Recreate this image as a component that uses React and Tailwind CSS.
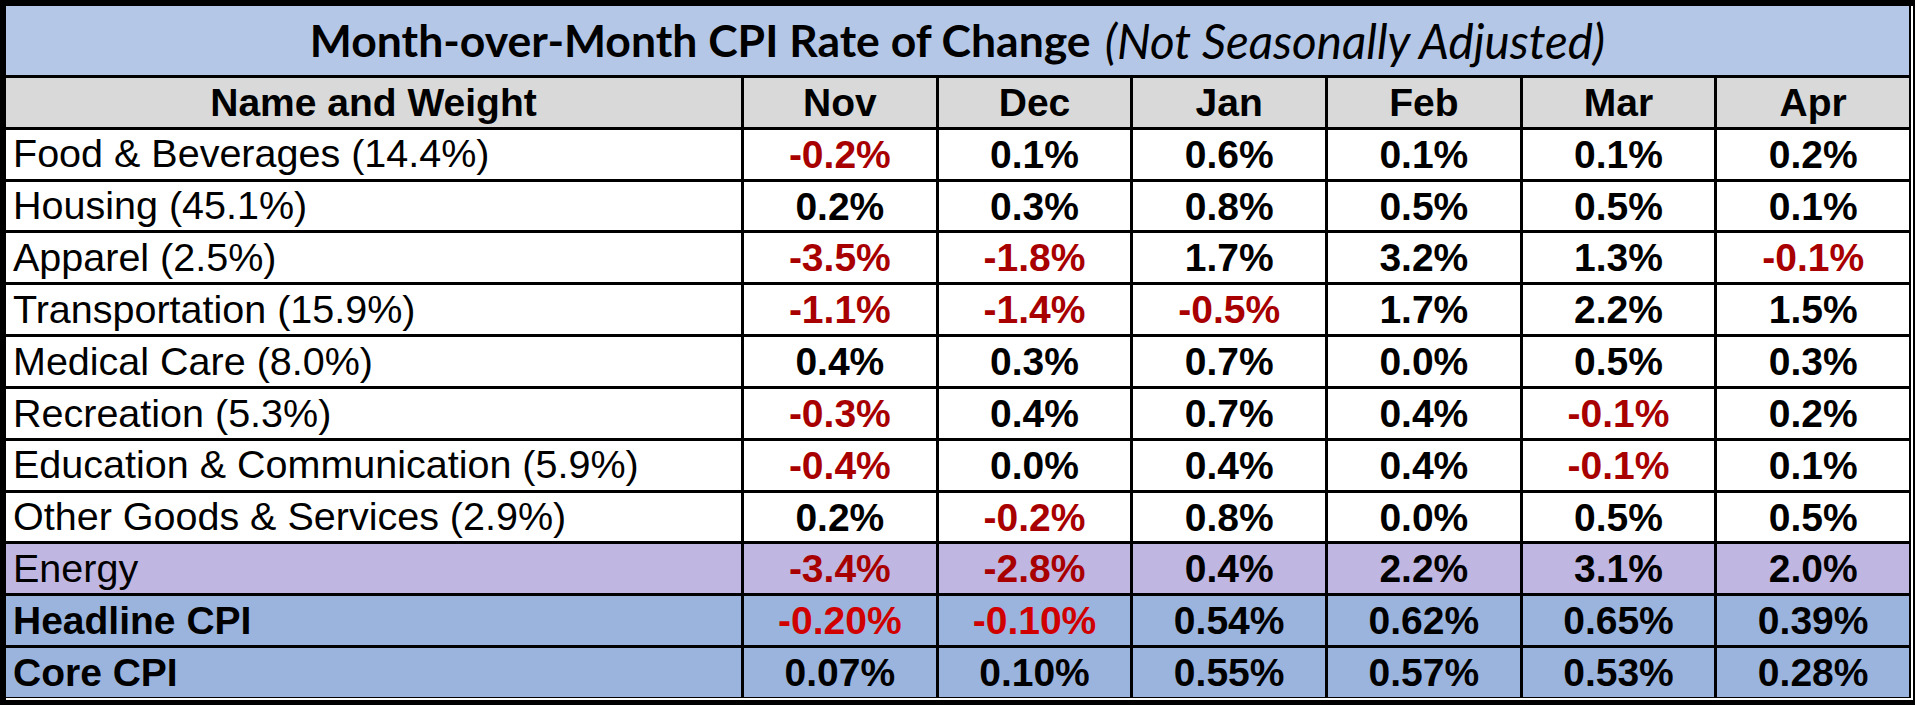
import React from "react";

const months = ["Nov", "Dec", "Jan", "Feb", "Mar", "Apr"];

const rows = [
  { name: "Food & Beverages (14.4%)", values: ["-0.2%", "0.1%", "0.6%", "0.1%", "0.1%", "0.2%"] },
  { name: "Housing (45.1%)", values: ["0.2%", "0.3%", "0.8%", "0.5%", "0.5%", "0.1%"] },
  { name: "Apparel (2.5%)", values: ["-3.5%", "-1.8%", "1.7%", "3.2%", "1.3%", "-0.1%"] },
  { name: "Transportation (15.9%)", values: ["-1.1%", "-1.4%", "-0.5%", "1.7%", "2.2%", "1.5%"] },
  { name: "Medical Care (8.0%)", values: ["0.4%", "0.3%", "0.7%", "0.0%", "0.5%", "0.3%"] },
  { name: "Recreation (5.3%)", values: ["-0.3%", "0.4%", "0.7%", "0.4%", "-0.1%", "0.2%"] },
  { name: "Education & Communication (5.9%)", values: ["-0.4%", "0.0%", "0.4%", "0.4%", "-0.1%", "0.1%"] },
  { name: "Other Goods & Services (2.9%)", values: ["0.2%", "-0.2%", "0.8%", "0.0%", "0.5%", "0.5%"] },
  { name: "Energy", values: ["-3.4%", "-2.8%", "0.4%", "2.2%", "3.1%", "2.0%"], bg: "bg-[#c0b6e2]" },
  { name: "Headline CPI", values: ["-0.20%", "-0.10%", "0.54%", "0.62%", "0.65%", "0.39%"], bg: "bg-[#9ab4de]", bold: true, red: "text-[#d00000]" },
  { name: "Core CPI", values: ["0.07%", "0.10%", "0.55%", "0.57%", "0.53%", "0.28%"], bg: "bg-[#9ab4de]", bold: true },
];

const App = () => {
  return (
    <div className="w-[1917px] h-[705px] bg-white font-['Liberation_Sans',Arial,sans-serif] text-black">
      {/* outer frame: heavy top/left, double line right/bottom */}
      <div className="w-[1915px] h-[705px] bg-black pt-[6px] pl-[6px] pr-[2px] pb-[5px]">
        <div className="h-full bg-white pr-[2px] pb-[2px]">
          <div className="h-full bg-black pr-[2px] pb-[1px]">
            <div className="h-full grid grid-cols-[735px_repeat(6,1fr)] grid-rows-[69px_repeat(12,1fr)] gap-[3px] bg-black">
              <div className="col-span-7 bg-[#b4c7e7] flex items-center justify-center font-['Lato',sans-serif] leading-none">
                <span className="font-bold text-[44.5px]">Month-over-Month CPI Rate of Change</span>
                <span className="italic text-[47.5px] ml-[14px]">(Not Seasonally Adjusted)</span>
              </div>

              <div className="bg-[#d9d9d9] flex items-center justify-center font-bold text-[39px] leading-none">
                Name and Weight
              </div>
              {months.map((m) => (
                <div key={m} className="bg-[#d9d9d9] flex items-center justify-center font-bold text-[39px] leading-none">
                  {m}
                </div>
              ))}

              {rows.map((row) => (
                <React.Fragment key={row.name}>
                  <div
                    className={`${row.bg || "bg-white"} flex items-center pl-[7px] leading-none ${
                      row.bold ? "font-bold text-[39px]" : "text-[39.5px]"
                    }`}
                  >
                    {row.name}
                  </div>
                  {row.values.map((v, i) => (
                    <div
                      key={i}
                      className={`${row.bg || "bg-white"} flex items-center justify-center font-bold text-[39px] leading-none ${
                        v.startsWith("-") ? row.red || "text-[#a80000]" : "text-black"
                      }`}
                    >
                      {v}
                    </div>
                  ))}
                </React.Fragment>
              ))}
            </div>
          </div>
        </div>
      </div>
    </div>
  );
};

export default App;
